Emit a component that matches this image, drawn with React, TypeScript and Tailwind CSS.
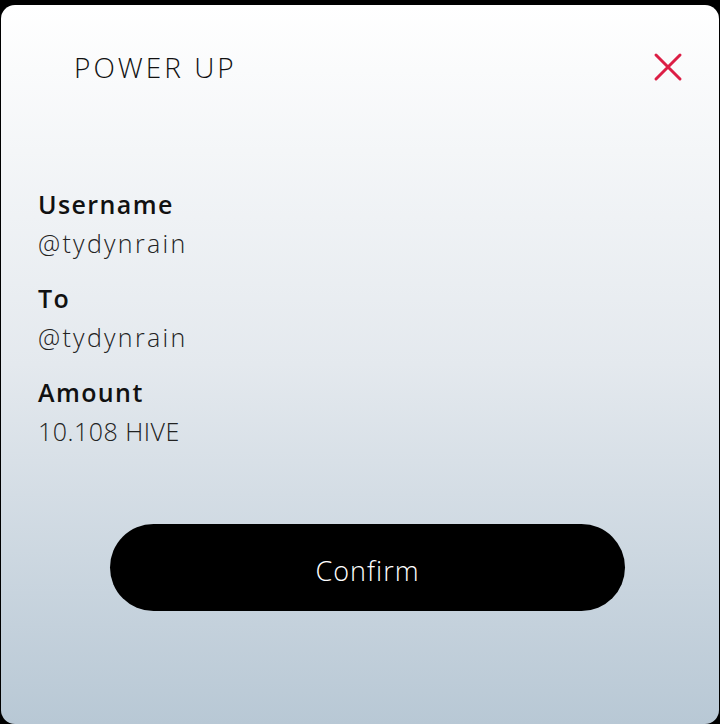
import React from "react";

export default function App() {
  return (
    <div className="w-[720px] h-[724px] bg-black pt-[5px] px-[1px] overflow-hidden" style={{ fontFamily: "'Open Sans', Lato, sans-serif" }}>
      <div className="h-[719px] rounded-[14px] bg-gradient-to-b from-[#ffffff] via-[#e4e9ee] to-[#b8c8d5] flex flex-col">
        <div className="flex items-center justify-between pt-[42px] pl-[73px] pr-[36px]">
          <h1 className="text-[28px] leading-[40px] font-light text-[#111] tracking-[3px]">POWER UP</h1>
          <svg width="30" height="30" viewBox="0 0 30 30">
            <path d="M3 3 L27 27 M27 3 L3 27" stroke="#dc1e45" strokeWidth="3" strokeLinecap="round" />
          </svg>
        </div>
        <div className="flex flex-col pl-[37px] pt-[98px]">
          <div className="text-[25px] leading-[39px] font-semibold text-[#111] tracking-[1.4px]">Username</div>
          <div className="text-[25px] leading-[39px] font-light text-[#222] tracking-[2.3px]">@tydynrain</div>
          <div className="text-[25px] leading-[39px] font-semibold text-[#111] mt-[16px] tracking-[1.4px]">To</div>
          <div className="text-[25px] leading-[39px] font-light text-[#222] tracking-[2.3px]">@tydynrain</div>
          <div className="text-[25px] leading-[39px] font-semibold text-[#111] mt-[16px] tracking-[1.4px]">Amount</div>
          <div className="text-[25px] leading-[39px] font-light text-[#222] tracking-[0.5px]">10.108 HIVE</div>
        </div>
        <div className="flex justify-center pt-[73px]">
          <button className="w-[515px] h-[87px] rounded-full bg-black text-white text-[27px] font-light ml-[15px] tracking-[1px] pt-[8px]">Confirm</button>
        </div>
      </div>
    </div>
  );
}
